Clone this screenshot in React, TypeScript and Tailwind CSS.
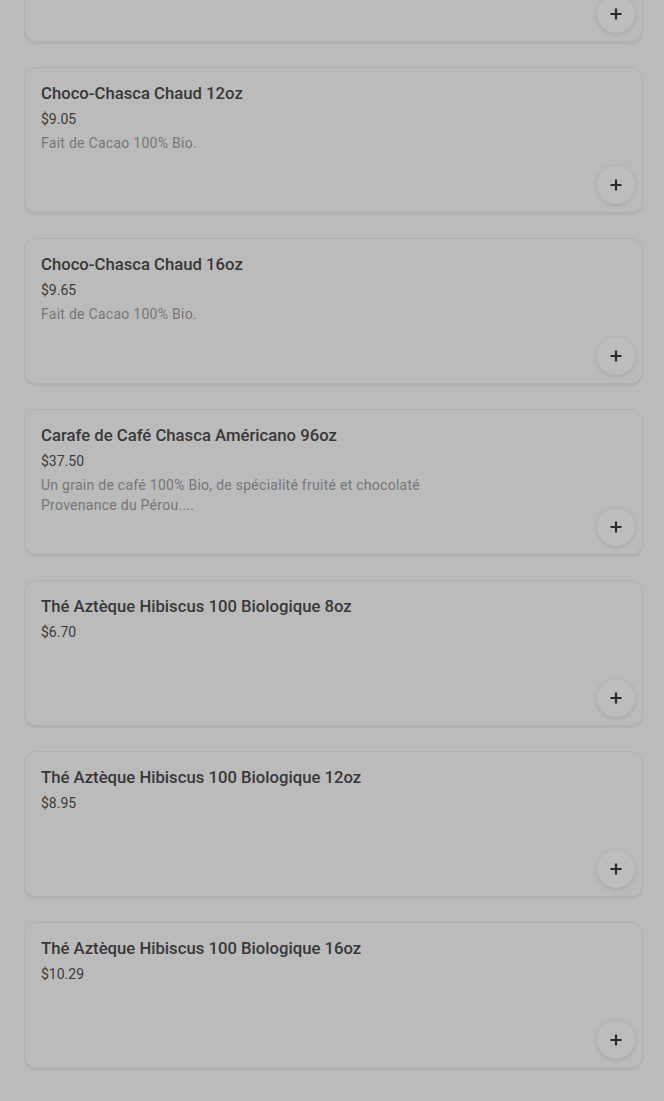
import React from 'react'

type Item = { name: string; price: string; desc?: string[] }

const items: Item[] = [
  { name: 'Choco-Chasca Chaud 8oz', price: '$6.85' },
  { name: 'Choco-Chasca Chaud 12oz', price: '$9.05', desc: ['Fait de Cacao 100% Bio.'] },
  { name: 'Choco-Chasca Chaud 16oz', price: '$9.65', desc: ['Fait de Cacao 100% Bio.'] },
  {
    name: 'Carafe de Café Chasca Américano 96oz',
    price: '$37.50',
    desc: ['Un grain de café 100% Bio, de spécialité fruité et chocolaté', 'Provenance du Pérou....'],
  },
  { name: 'Thé Aztèque Hibiscus 100 Biologique 8oz', price: '$6.70' },
  { name: 'Thé Aztèque Hibiscus 100 Biologique 12oz', price: '$8.95' },
  { name: 'Thé Aztèque Hibiscus 100 Biologique 16oz', price: '$10.29' },
]

function PlusIcon() {
  return (
    <svg width="14" height="14" viewBox="0 0 14 14" fill="none">
      <path d="M7 1.5v11M1.5 7h11" stroke="#2b2b2b" strokeWidth="2.2" />
    </svg>
  )
}

function ItemCard({ item }: { item: Item }) {
  return (
    <div className="relative h-[146px] rounded-[12px] border border-[#b1b1b1] bg-[#bbbbbb] px-4 pt-[14px] shadow-[0_2px_2px_rgba(0,0,0,0.06)]">
      <div className="text-[16.7px] leading-6 font-medium text-[#383838]">{item.name}</div>
      <div className="mt-[3px] text-[14px] leading-5 text-[#3c3c3c]">{item.price}</div>
      {item.desc && (
        <div className="mt-[4px] text-[14px] leading-5 tracking-[0.27px] text-[#777777]">
          {item.desc.map((d, i) => (
            <div key={i}>{d}</div>
          ))}
        </div>
      )}
      <button className="absolute right-[7px] bottom-[8px] flex h-[38px] w-[38px] items-center justify-center rounded-full bg-[#bdbdbd] shadow-[0_1px_5px_rgba(0,0,0,0.12)]">
        <PlusIcon />
      </button>
    </div>
  )
}

export default function App() {
  return (
    <div className="h-[1101px] overflow-hidden bg-[#bbbbbb]" style={{ fontFamily: 'Roboto, "Noto Sans", sans-serif' }}>
      <div className="-mt-[104px] flex flex-col gap-[25px] pl-[24px] pr-[21px]">
        {items.map((item, i) => (
          <ItemCard key={i} item={item} />
        ))}
      </div>
    </div>
  )
}
